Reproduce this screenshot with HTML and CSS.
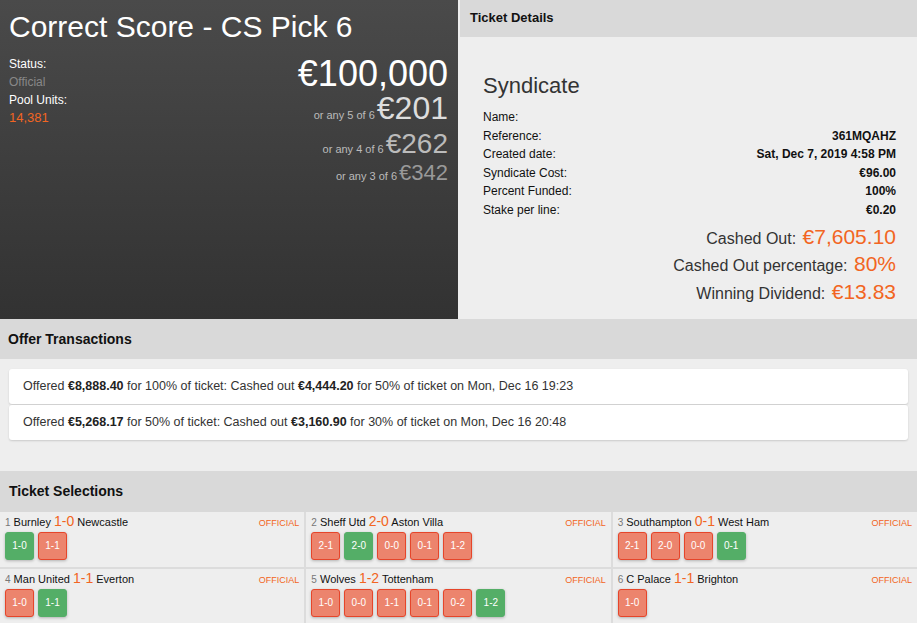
FILE: index.html
```html
<!DOCTYPE html>
<html lang="en">
<head>
  <meta charset="UTF-8" />
  <title>Ticket – Correct Score</title>
  <link rel="stylesheet" href="styles.css">
</head>
<body>

  <div class="top">
    <div class="pool">
      <h1>Correct Score - CS Pick 6</h1>
      <div class="pool-body">
        <div class="pool-meta">
          <div class="meta-label">Status:</div>
          <div class="meta-status">Official</div>
          <div class="meta-label">Pool Units:</div>
          <div class="meta-units">14,381</div>
        </div>
        <div class="prizes">
          <div class="prize prize-main">€100,000</div>
          <div class="prize prize-5"><span class="prize-note">or any 5 of 6</span>€201</div>
          <div class="prize prize-4"><span class="prize-note">or any 4 of 6</span>€262</div>
          <div class="prize prize-3"><span class="prize-note">or any 3 of 6</span>€342</div>
        </div>
      </div>
    </div>

    <div class="details">
      <div class="panel-head">Ticket Details</div>
      <div class="details-body">
        <h2>Syndicate</h2>
        <div class="detail-row"><span>Name:</span><strong></strong></div>
        <div class="detail-row"><span>Reference:</span><strong>361MQAHZ</strong></div>
        <div class="detail-row"><span>Created date:</span><strong>Sat, Dec 7, 2019 4:58 PM</strong></div>
        <div class="detail-row"><span>Syndicate Cost:</span><strong>€96.00</strong></div>
        <div class="detail-row"><span>Percent Funded:</span><strong>100%</strong></div>
        <div class="detail-row"><span>Stake per line:</span><strong>€0.20</strong></div>

        <div class="cash-list">
          <div class="cash-row">Cashed Out: <span class="cash-val">€7,605.10</span></div>
          <div class="cash-row">Cashed Out percentage: <span class="cash-val">80%</span></div>
          <div class="cash-row">Winning Dividend: <span class="cash-val">€13.83</span></div>
        </div>
      </div>
    </div>
  </div>

  <div class="section-head">Offer Transactions</div>
  <div class="offers">
    <div class="offer">Offered <strong>€8,888.40</strong> for 100% of ticket: Cashed out <strong>€4,444.20</strong> for 50% of ticket on Mon, Dec 16 19:23</div>
    <div class="offer">Offered <strong>€5,268.17</strong> for 50% of ticket: Cashed out <strong>€3,160.90</strong> for 30% of ticket on Mon, Dec 16 20:48</div>
  </div>

  <div class="section-head section-head-sel">Ticket Selections</div>
  <div class="selections">
    <div class="match">
      <div class="match-head">
        <div><span class="match-no">1</span> Burnley <span class="score">1-0</span> Newcastle</div>
        <span class="match-status">OFFICIAL</span>
      </div>
      <div class="chips">
        <span class="chip win">1-0</span>
        <span class="chip">1-1</span>
      </div>
    </div>
    <div class="match">
      <div class="match-head">
        <div><span class="match-no">2</span> Sheff Utd <span class="score">2-0</span> Aston Villa</div>
        <span class="match-status">OFFICIAL</span>
      </div>
      <div class="chips">
        <span class="chip">2-1</span>
        <span class="chip win">2-0</span>
        <span class="chip">0-0</span>
        <span class="chip">0-1</span>
        <span class="chip">1-2</span>
      </div>
    </div>
    <div class="match">
      <div class="match-head">
        <div><span class="match-no">3</span> Southampton <span class="score">0-1</span> West Ham</div>
        <span class="match-status">OFFICIAL</span>
      </div>
      <div class="chips">
        <span class="chip">2-1</span>
        <span class="chip">2-0</span>
        <span class="chip">0-0</span>
        <span class="chip win">0-1</span>
      </div>
    </div>
    <div class="match">
      <div class="match-head">
        <div><span class="match-no">4</span> Man United <span class="score">1-1</span> Everton</div>
        <span class="match-status">OFFICIAL</span>
      </div>
      <div class="chips">
        <span class="chip">1-0</span>
        <span class="chip win">1-1</span>
      </div>
    </div>
    <div class="match">
      <div class="match-head">
        <div><span class="match-no">5</span> Wolves <span class="score">1-2</span> Tottenham</div>
        <span class="match-status">OFFICIAL</span>
      </div>
      <div class="chips">
        <span class="chip">1-0</span>
        <span class="chip">0-0</span>
        <span class="chip">1-1</span>
        <span class="chip">0-1</span>
        <span class="chip">0-2</span>
        <span class="chip win">1-2</span>
      </div>
    </div>
    <div class="match">
      <div class="match-head">
        <div><span class="match-no">6</span> C Palace <span class="score">1-1</span> Brighton</div>
        <span class="match-status">OFFICIAL</span>
      </div>
      <div class="chips">
        <span class="chip">1-0</span>
      </div>
    </div>
  </div>

</body>
</html>
```

FILE: styles.css
```css
/* General */
body {
  margin: 0;
  font-family: "Liberation Sans", Arial, sans-serif;
  background: #eeeeee;
  color: #222;
}

/* Top area */
.top {
  display: grid;
  grid-template-columns: 458px 1fr;
  gap: 2px;
  height: 319px;
}

/* Pool panel */
.pool {
  background: linear-gradient(to bottom, #4a4a4a, #323232);
  color: white;
  padding: 8px 10px 0 9px;
}

.pool h1 {
  margin: 0;
  font-size: 30px;
  font-weight: normal;
  line-height: 38px;
}

.pool-body {
  display: flex;
  justify-content: space-between;
  margin-top: 9px;
}

.pool-meta {
  font-size: 12px;
  line-height: 18px;
}

.meta-status {
  color: #888;
}

.meta-units {
  color: #f26522;
  font-size: 13px;
}

.prizes {
  text-align: right;
  padding-top: 2px;
}

.prize-main {
  font-size: 36px;
  line-height: 33px;
}

.prize-5 {
  font-size: 32px;
  color: #dddddd;
  line-height: 36px;
}

.prize-4 {
  font-size: 28px;
  color: #bbbbbb;
  line-height: 35px;
}

.prize-3 {
  font-size: 22px;
  color: #999999;
  line-height: 23px;
}

.prize-note {
  font-size: 11px;
  line-height: 10px;
  color: #bbb;
  margin-right: 2px;
}

/* Ticket details */
.details {
  background: #eeeeee;
}

.panel-head {
  background: #d9d9d9;
  height: 37px;
  line-height: 35px;
  padding: 0 10px;
  font-size: 13px;
  font-weight: bold;
  color: #111;
}

.details-body {
  padding: 35px 21px 0 23px;
}

.details-body h2 {
  margin: 0 0 8px;
  font-size: 22px;
  font-weight: normal;
  color: #333;
  line-height: 28px;
}

.detail-row {
  display: flex;
  justify-content: space-between;
  font-size: 12px;
  line-height: 18.6px;
  color: #111;
}

.cash-list {
  margin-top: 5px;
  text-align: right;
}

.cash-row {
  font-size: 16px;
  color: #333;
  line-height: 27.5px;
}

.cash-val {
  font-size: 21px;
  line-height: 20px;
  color: #f26522;
  margin-left: 2px;
}

/* Sections */
.section-head {
  background: #d9d9d9;
  height: 40px;
  line-height: 40px;
  padding: 0 8px;
  font-size: 14px;
  font-weight: bold;
  color: #111;
}

.section-head-sel {
  height: 41px;
  margin-top: 1px;
  padding-left: 9px;
}

.offers {
  padding: 10px 9px 30px;
  display: flex;
  flex-direction: column;
  gap: 1px;
}

.offer {
  background: white;
  border-radius: 3px;
  box-shadow: 0 1px 2px rgba(0,0,0,0.15);
  height: 35px;
  line-height: 34px;
  padding: 0 14px;
  font-size: 12.5px;
  color: #333;
}

.offer strong {
  color: #222;
}

/* Ticket selections */
.selections {
  display: grid;
  grid-template-columns: repeat(3, 1fr);
  gap: 2px;
  background: #dcdcdc;
}

.match {
  background: #eeeeee;
  padding: 1px 5px 7px;
}

.match-head {
  display: flex;
  justify-content: space-between;
  align-items: baseline;
  height: 17px;
  font-size: 11px;
  line-height: 16px;
  color: #111;
}

.match-no {
  font-size: 10px;
  color: #777;
}

.score {
  font-size: 14px;
  color: #f26522;
}

.match-status {
  font-size: 9px;
  color: #f26522;
}

.chips {
  display: flex;
  gap: 4px;
  margin-top: 2px;
}

.chip {
  width: 27px;
  height: 26px;
  line-height: 26px;
  text-align: center;
  font-size: 10px;
  color: white;
  background: #ec846d;
  border: 1px solid #e6452a;
  border-radius: 3px;
  box-shadow: 0 1px 3px rgba(0,0,0,0.25);
}

.chip.win {
  background: #54ae67;
  border-color: #54ae67;
}
```
